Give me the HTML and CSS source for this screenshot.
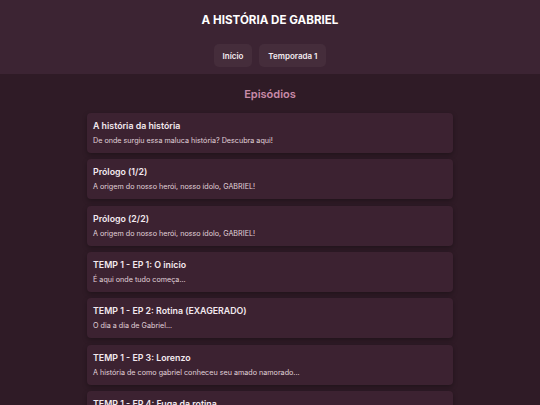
FILE: index.html
```html
<!DOCTYPE html>
<html lang="pt-BR">
<head>
<meta charset="utf-8">
<title>A história de Gabriel</title>
<link rel="stylesheet" href="styles.css">
</head>
<body>
<header class="top">
  <h1 class="site-title">A HISTÓRIA DE GABRIEL</h1>
  <nav class="nav">
    <a class="nav-btn" href="#">Início</a>
    <a class="nav-btn" href="#">Temporada 1</a>
  </nav>
</header>
<main class="content">
  <h2 class="section-title">Episódios</h2>
  <ul class="episodes">
    <li class="card"><h3 class="card-title">A história da história</h3><p class="card-desc">De onde surgiu essa maluca história? Descubra aqui!</p></li>
    <li class="card"><h3 class="card-title">Prólogo (1/2)</h3><p class="card-desc">A origem do nosso herói, nosso ídolo, GABRIEL!</p></li>
    <li class="card"><h3 class="card-title">Prólogo (2/2)</h3><p class="card-desc">A origem do nosso herói, nosso ídolo, GABRIEL!</p></li>
    <li class="card"><h3 class="card-title">TEMP 1 - EP 1: O início</h3><p class="card-desc">É aqui onde tudo começa...</p></li>
    <li class="card"><h3 class="card-title">TEMP 1 - EP 2: Rotina (EXAGERADO)</h3><p class="card-desc">O dia a dia de Gabriel...</p></li>
    <li class="card"><h3 class="card-title">TEMP 1 - EP 3: Lorenzo</h3><p class="card-desc">A história de como gabriel conheceu seu amado namorado...</p></li>
    <li class="card"><h3 class="card-title">TEMP 1 - EP 4: Fuga da rotina</h3><p class="card-desc">Gabriel decide fugir da rotina...</p></li>
  </ul>
</main>
</body>
</html>
```
FILE: styles.css
```css
* { box-sizing: border-box; }
html, body { margin: 0; padding: 0; }
body {
  background: #2f1b26;
  font-family: Inter, "Noto Sans", sans-serif;
  color: #f2e8ee;
  overflow: hidden;
}
.top {
  background: #3c2433;
  padding: 12px 0 7px;
  text-align: center;
}
.site-title {
  margin: 0;
  font-size: 11.6px;
  line-height: 16px;
  font-weight: 700;
  color: #ffffff;
}
.nav {
  display: flex;
  justify-content: center;
  gap: 7px;
  margin-top: 16px;
}
.nav-btn {
  display: flex;
  align-items: center;
  height: 23px;
  padding: 0 9px;
  border-radius: 5px;
  background: #452d3b;
  color: #f4ecf0;
  font-size: 8px;
  font-weight: 600;
  text-decoration: none;
}
.content { padding: 0; }
.section-title {
  margin: 13px 0 11px;
  text-align: center;
  font-size: 11px;
  line-height: 15px;
  font-weight: 600;
  color: #c98aa8;
}
.episodes {
  list-style: none;
  margin: 0 auto;
  padding: 0;
  width: 366px;
  display: flex;
  flex-direction: column;
  gap: 6.33px;
}
.card {
  background: #3c2231;
  border-radius: 4px;
  padding: 6px 6px 7px;
  box-shadow: 0 2px 5px rgba(0, 0, 0, 0.3);
}
.card-title {
  margin: 0;
  font-size: 8.8px;
  line-height: 13px;
  font-weight: 600;
  color: #f3e9ef;
}
.card-desc {
  margin: 4px 0 0;
  font-size: 7.2px;
  line-height: 10px;
  color: #e0d2da;
}
```
